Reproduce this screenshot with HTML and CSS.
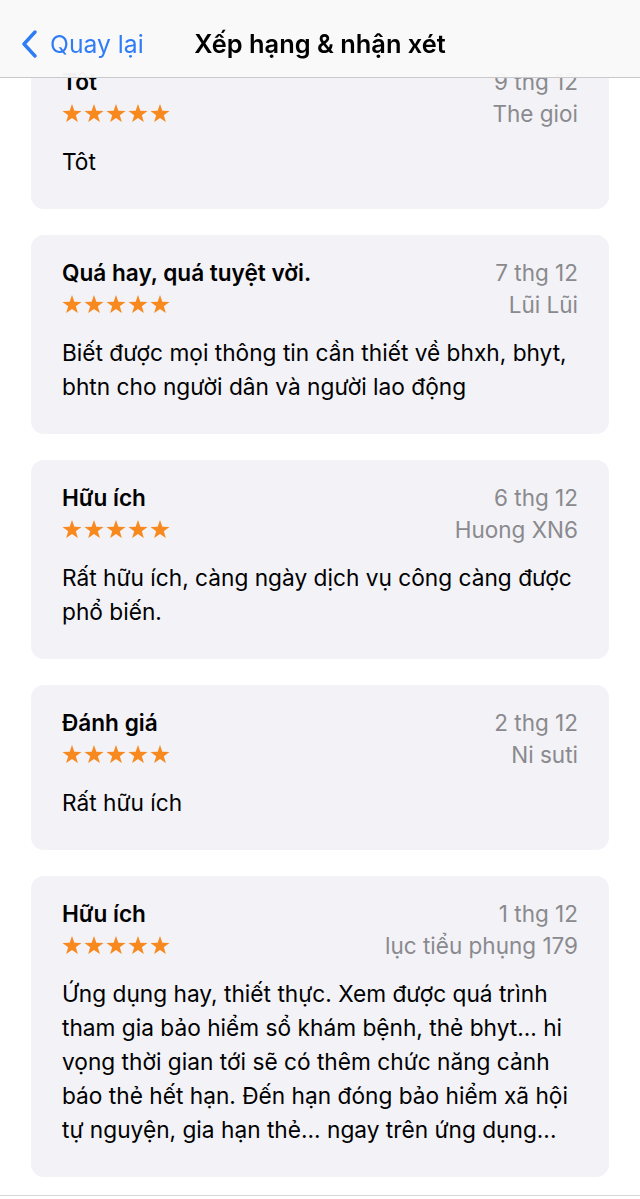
FILE: index.html
```html
<!DOCTYPE html>
<html lang="vi">
<head>
    <meta charset="UTF-8">
    <meta name="viewport" content="width=device-width, initial-scale=1.0">
    <title>Xếp hạng &amp; nhận xét</title>
    <link rel="stylesheet" href="styles.css">
</head>
<body>
    <svg width="0" height="0" class="defs">
        <symbol id="star" viewBox="0 0 20 18.5">
            <polygon points="10,0 12.35,6.76 19.51,6.91 13.8,11.24 15.88,18.09 10,14 4.12,18.09 6.2,11.24 0.49,6.91 7.65,6.76" fill="#f7891f"/>
        </symbol>
    </svg>

    <header class="navbar">
        <a class="back" href="#">
            <svg width="18" height="28" viewBox="0 0 18 28">
                <path d="M15 2 L4 14 L15 26" fill="none" stroke="#2f7cf6" stroke-width="3.4" stroke-linecap="round" stroke-linejoin="round"/>
            </svg>
            <span>Quay lại</span>
        </a>
        <h1>Xếp hạng &amp; nhận xét</h1>
        <div></div>
    </header>

    <main class="list">
        <div class="card">
            <div class="title">Tôt</div>
            <div class="date">9 thg 12</div>
            <div class="stars"><svg><use href="#star"/></svg><svg><use href="#star"/></svg><svg><use href="#star"/></svg><svg><use href="#star"/></svg><svg><use href="#star"/></svg></div>
            <div class="author">The gioi</div>
            <p class="body">Tôt</p>
        </div>

        <div class="card">
            <div class="title">Quá hay, quá tuyệt vời.</div>
            <div class="date">7 thg 12</div>
            <div class="stars"><svg><use href="#star"/></svg><svg><use href="#star"/></svg><svg><use href="#star"/></svg><svg><use href="#star"/></svg><svg><use href="#star"/></svg></div>
            <div class="author">Lũi Lũi</div>
            <p class="body">Biết được mọi thông tin cần thiết về bhxh, bhyt, bhtn cho người dân và người lao động</p>
        </div>

        <div class="card">
            <div class="title">Hữu ích</div>
            <div class="date">6 thg 12</div>
            <div class="stars"><svg><use href="#star"/></svg><svg><use href="#star"/></svg><svg><use href="#star"/></svg><svg><use href="#star"/></svg><svg><use href="#star"/></svg></div>
            <div class="author">Huong XN6</div>
            <p class="body">Rất hữu ích, càng ngày dịch vụ công càng được phổ biến.</p>
        </div>

        <div class="card">
            <div class="title">Đánh giá</div>
            <div class="date">2 thg 12</div>
            <div class="stars"><svg><use href="#star"/></svg><svg><use href="#star"/></svg><svg><use href="#star"/></svg><svg><use href="#star"/></svg><svg><use href="#star"/></svg></div>
            <div class="author">Ni suti</div>
            <p class="body">Rất hữu ích</p>
        </div>

        <div class="card">
            <div class="title">Hữu ích</div>
            <div class="date">1 thg 12</div>
            <div class="stars"><svg><use href="#star"/></svg><svg><use href="#star"/></svg><svg><use href="#star"/></svg><svg><use href="#star"/></svg><svg><use href="#star"/></svg></div>
            <div class="author">lục tiểu phụng 179</div>
            <p class="body">Ứng dụng hay, thiết thực. Xem được quá trình tham gia bảo hiểm sổ khám bệnh, thẻ bhyt... hi vọng thời gian tới sẽ có thêm chức năng cảnh báo thẻ hết hạn. Đến hạn đóng bảo hiểm xã hội tự nguyện, gia hạn thẻ... ngay trên ứng dụng...</p>
        </div>
    </main>

    <div class="tabbar"></div>
</body>
</html>
```

FILE: styles.css
```css
body {
    margin: 0;
    background: #ffffff;
    font-family: Inter, "Noto Sans", sans-serif;
    color: #000;
}
.defs {
    position: absolute;
}
.navbar {
    position: fixed;
    top: 0;
    left: 0;
    right: 0;
    height: 78px;
    box-sizing: border-box;
    padding-top: 10px;
    background: rgba(249, 249, 249, 0.97);
    border-bottom: 1px solid #c9c9cc;
    display: grid;
    grid-template-columns: 1fr auto 1fr;
    align-items: center;
    z-index: 2;
}
.back {
    display: flex;
    align-items: center;
    gap: 12px;
    padding-left: 20px;
    color: #2f7cf6;
    text-decoration: none;
    font-size: 24.7px;
}
.navbar h1 {
    margin: 0;
    font-size: 25.4px;
    font-weight: 600;
}
.list {
    padding: 44px 31px 30px;
    display: flex;
    flex-direction: column;
    gap: 26px;
}
.card {
    background: #f2f2f7;
    border-radius: 13px;
    padding: 21px 31px 30px;
    display: grid;
    grid-template-columns: 1fr auto;
    grid-template-rows: 32px 32px;
    align-items: center;
}
.title {
    font-size: 22.6px;
    font-weight: 600;
}
.date,
.author {
    font-size: 22.5px;
    color: #8a8a8e;
    text-align: right;
}
.stars {
    display: flex;
    gap: 2px;
    height: 19px;
}
.stars svg {
    width: 20px;
    height: 18.5px;
}
.body {
    grid-column: 1 / 3;
    margin: 16px 0 0;
    font-size: 22.7px;
    line-height: 34px;
}
.tabbar {
    position: fixed;
    left: 0;
    right: 0;
    bottom: 0;
    height: 3px;
    background: #fff;
    border-top: 1px solid #d6d6d8;
}
```
